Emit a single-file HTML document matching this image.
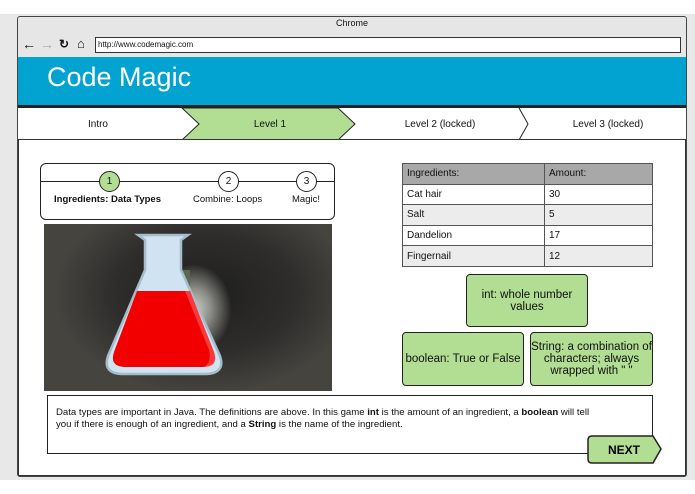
<!DOCTYPE html>
<html><head><style>
*{margin:0;padding:0;box-sizing:border-box}
body{width:695px;height:494px;background:#fff;font-family:"Liberation Sans",Arial,sans-serif;position:relative;overflow:hidden;color:#111}
.a{position:absolute}
.g{background:#b1de93;border:1.5px solid #222;border-radius:4px;display:flex;align-items:center;justify-content:center;text-align:center;font-size:11.5px;line-height:12px}
table{border-collapse:collapse;font-size:10px}
td{border:1px solid #555;height:20.6px;padding:0 0 0 4px}
.c{position:absolute;width:21px;height:21px;border-radius:50%;border:1.5px solid #222;font-size:10px;display:flex;align-items:center;justify-content:center}
</style></head><body>
<div class="a" style="left:0;top:14px;width:695px;height:466px;background:#e8e8e8"></div>
<div class="a" style="left:17px;top:16px;width:670px;height:461px;border:1.5px solid #444;border-radius:3px;background:#e6e6e6"></div>
<div class="a" style="left:17px;top:18px;width:670px;text-align:center;font-size:9px">Chrome</div>
<div class="a" style="left:22px;top:37px;font-size:14px;line-height:15px;font-weight:bold">←</div>
<div class="a" style="left:40px;top:37px;font-size:14px;line-height:15px;color:#aaa;font-weight:bold">→</div>
<div class="a" style="left:59px;top:37px;font-size:12px;line-height:15px;font-weight:bold">↻</div>
<div class="a" style="left:77px;top:36px;font-size:13px;line-height:15px;font-weight:bold">⌂</div>
<div class="a" style="left:95px;top:37px;width:586px;height:16px;border:1.5px solid #333;background:#fff;font-size:8px;padding:2px 2px">http://www.codemagic.com</div>
<div class="a" style="left:18px;top:57px;width:668px;height:51px;background:#02a3d0;border-bottom:3px solid #222"></div>
<div class="a" style="left:47px;top:62px;font-size:27px;color:#fff">Code Magic</div>
<div class="a" style="left:18px;top:108px;width:668px;height:32px;background:#fff"></div>
<svg class="a" style="left:18px;top:108px" width="668" height="32">
<polygon points="164,0 320,0 337,16 320,32 164,32 181,16" fill="#b1de93" stroke="#222"/>
<polyline points="501,0 510,16 501,32" fill="none" stroke="#222"/>
</svg>
<div class="a" style="left:18px;top:119px;width:160px;text-align:center;font-size:10px">Intro</div>
<div class="a" style="left:190px;top:119px;width:160px;text-align:center;font-size:10px">Level 1</div>
<div class="a" style="left:360px;top:119px;width:160px;text-align:center;font-size:10px">Level 2 (locked)</div>
<div class="a" style="left:528px;top:119px;width:160px;text-align:center;font-size:10px">Level 3 (locked)</div>
<div class="a" style="left:18px;top:139px;width:668px;height:337px;border:1.5px solid #333;background:#fff"></div>
<div class="a" style="left:40px;top:163px;width:295px;height:57px;border:1.5px solid #222;border-radius:6px"></div>
<div class="a" style="left:40px;top:181px;width:295px;height:1px;background:#222"></div>
<div class="c" style="left:99px;top:171px;background:#b1de93">1</div>
<div class="c" style="left:218px;top:171px;background:#fff">2</div>
<div class="c" style="left:296px;top:171px;background:#fff">3</div>
<div class="a" style="left:54px;top:194px;font-size:9.5px;font-weight:bold">Ingredients: Data Types</div>
<div class="a" style="left:193px;top:194px;font-size:9.5px">Combine: Loops</div>
<div class="a" style="left:292px;top:194px;font-size:9.5px">Magic!</div>
<div class="a" style="left:44px;top:224px;width:288px;height:167px;background:radial-gradient(ellipse 50px 60px at 150px 85px,#cfcfc8,#8a8a84 35%,transparent 75%),radial-gradient(ellipse 150px 100px at 160px 70px,#1e1e1c,#2e2d2b 60%,#45443f),linear-gradient(#333230,#5a5854)"></div>
<div class="a" style="left:175px;top:270px;width:15px;height:45px;background:#5a6a50"></div>
<svg class="a" style="left:44px;top:224px" width="288" height="167">
<path d="M94,11 L101,16 L101,46 L64,132 Q58,150 80,150 L160,150 Q182,150 176,132 L137,46 L137,16 L144,11 Z" fill="#cfe3f2" stroke="#a5bccb" stroke-width="2.5"/>
<path d="M93,67 L146,67 L170,128 Q175,143 158,143 L82,143 Q65,143 70,128 Z" fill="#f20000"/>
<path d="M146,67 L170,128 Q175,143 160,143 Q168,138 165,126 L141,67Z" fill="#ff6060" opacity=".6"/>
</svg>
<div class="a" style="left:402px;top:163px">
<table style="width:251px"><tr style="background:#a8a8a8"><td style="width:142px">Ingredients:</td><td>Amount:</td></tr>
<tr><td>Cat hair</td><td>30</td></tr>
<tr style="background:#ececec"><td>Salt</td><td>5</td></tr>
<tr><td>Dandelion</td><td>17</td></tr>
<tr style="background:#ececec"><td>Fingernail</td><td>12</td></tr></table></div>
<div class="a g" style="left:466px;top:274px;width:122px;height:53px">int: whole number<br>values</div>
<div class="a g" style="left:402px;top:332px;width:122px;height:54px">boolean: True or False</div>
<div class="a g" style="left:530px;top:332px;width:123px;height:54px">String: a combination of characters; always wrapped with " "</div>
<div class="a" style="left:47px;top:395px;width:606px;height:59px;border:1.5px solid #222;background:#fff;font-size:9.6px;line-height:12px;padding:11px 8px 0 8px">Data types are important in Java. The definitions are above. In this game <b>int</b> is the amount of an ingredient, a <b>boolean</b> will tell<br>you if there is enough of an ingredient, and a <b>String</b> is the name of the ingredient.</div>
<svg class="a" style="left:587px;top:435px" width="76" height="30">
<path d="M5,1 L66,1 L74,14 L66,28 L5,28 Q1,28 1,24 L1,5 Q1,1 5,1Z" fill="#b1de93" stroke="#222" stroke-width="1.5"/>
<text x="37" y="19" text-anchor="middle" font-family="Liberation Sans" font-weight="bold" font-size="12">NEXT</text>
</svg>
</body></html>
